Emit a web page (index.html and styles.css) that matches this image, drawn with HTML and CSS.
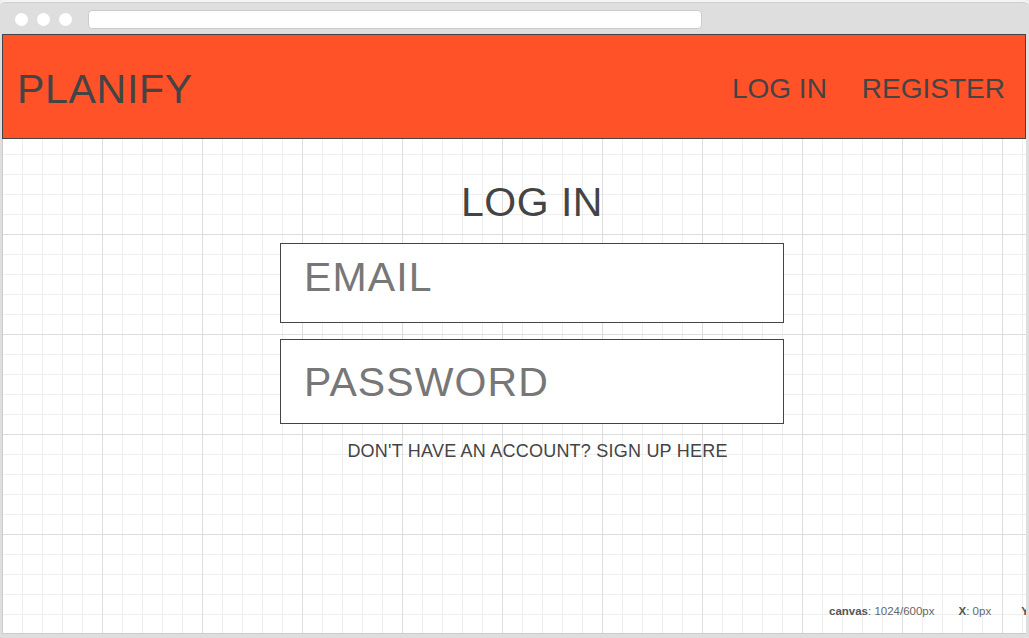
FILE: index.html
```html
<!DOCTYPE html>
<html>
<head>
<meta charset="utf-8">
<link rel="stylesheet" href="styles.css">
</head>
<body>
<div class="window">
  <div class="titlebar">
    <div class="dots">
      <span class="dot"></span><span class="dot"></span><span class="dot"></span>
    </div>
    <div class="urlbar"></div>
  </div>
  <div class="canvas">
    <header class="topbar">
      <div class="brand">PLANIFY</div>
      <nav class="nav">
        <span class="nav-item">LOG IN</span>
        <span class="nav-item">REGISTER</span>
      </nav>
    </header>
    <main class="content">
      <h1 class="title">LOG IN</h1>
      <div class="field field-email">EMAIL</div>
      <div class="field field-password">PASSWORD</div>
      <p class="signup">DON'T HAVE AN ACCOUNT? SIGN UP HERE</p>
    </main>
    <div class="status">
      <span class="stat stat-canvas"><b>canvas</b>: 1024/600px</span>
      <span class="stat stat-x"><b>X</b>: 0px</span>
      <span class="stat"><b>Y</b>: 0px</span>
    </div>
  </div>
</div>
</body>
</html>
```

FILE: styles.css
```css
* { box-sizing: border-box; }
html, body { margin: 0; padding: 0; }
body {
  width: 1029px;
  height: 638px;
  overflow: hidden;
  background: #eeeeee;
  font-family: "Liberation Sans", Arial, sans-serif;
}
.window {
  width: 1029px;
  height: 638px;
  background: #dedede;
  border-top: 2px solid #f4f4f4;
  border-radius: 6px 6px 0 0;
  box-shadow: inset 0 1px 0 #cfcfcf;
  display: flex;
  flex-direction: column;
}
.titlebar {
  height: 32px;
  display: flex;
  align-items: center;
  padding: 2px 0 0 15px;
}
.dots { display: flex; gap: 9px; }
.dot {
  width: 13px;
  height: 13px;
  border-radius: 50%;
  background: #ffffff;
}
.urlbar {
  margin-left: 16px;
  width: 614px;
  height: 19px;
  background: #ffffff;
  border: 1px solid #cccccc;
  border-radius: 4px;
}
.canvas {
  position: relative;
  overflow: hidden;
  margin: 0 3px 0 2px;
  height: 600px;
  background-color: #ffffff;
  background-image:
    linear-gradient(to right, #dddddd 1px, transparent 1px),
    linear-gradient(to bottom, #dddddd 1px, transparent 1px),
    linear-gradient(to right, #eeeeee 1px, transparent 1px),
    linear-gradient(to bottom, #eeeeee 1px, transparent 1px);
  background-size: 100px 100px, 100px 100px, 20px 20px, 20px 20px;
  box-shadow: inset 1px 0 0 #cccccc, inset 0 -1px 0 #cccccc;
  display: flex;
  flex-direction: column;
}
.topbar {
  flex: none;
  height: 105px;
  background: #ff5229;
  border: 1px solid #444444;
  display: flex;
  align-items: center;
  justify-content: space-between;
  padding: 5px 20px 0 14px;
  color: #444444;
}
.brand {
  font-size: 41px;
  letter-spacing: 0.7px;
}
.nav {
  display: flex;
  gap: 35px;
}
.nav-item {
  font-size: 28px;
}
.content {
  display: flex;
  flex-direction: column;
  align-items: center;
  padding-left: 36px;
}
.title {
  margin: 40px 0 0;
  font-size: 41px;
  font-weight: normal;
  color: #444444;
  line-height: 47px;
  letter-spacing: 0.5px;
}
.field {
  width: 504px;
  border: 1px solid #444444;
  background: #ffffff;
  font-size: 41px;
  color: #777777;
  line-height: 47px;
  padding-left: 23px;
  letter-spacing: 1.1px;
}
.field-email {
  margin-top: 17px;
  height: 80px;
  padding-top: 10px;
}
.field-password {
  margin-top: 16px;
  height: 85px;
  padding-top: 19px;
}
.signup {
  margin: 17px 0 0;
  padding-left: 11px;
  font-size: 18px;
  color: #444444;
  letter-spacing: 0.22px;
}
.status {
  position: absolute;
  left: 827px;
  top: 571px;
  display: flex;
  font-size: 11.5px;
  color: #666666;
  white-space: nowrap;
}
.stat-canvas { margin-right: 24px; }
.stat-x { margin-right: 30px; }
.stat b { color: #555555; }
```
